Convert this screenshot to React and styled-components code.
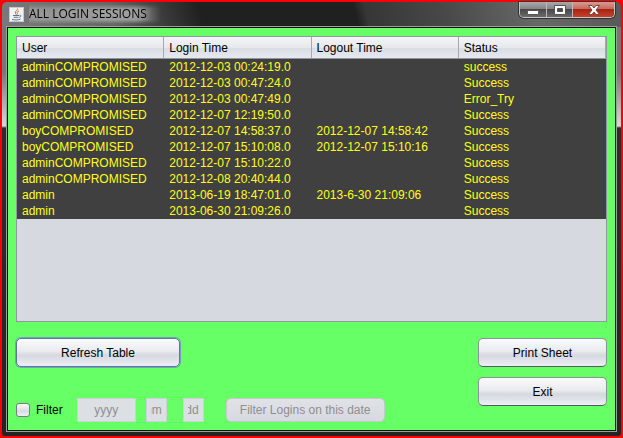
import React from "react";
import styled, { createGlobalStyle, css } from "styled-components";

const GlobalStyle = createGlobalStyle`
  * { box-sizing: border-box; }
  body {
    margin: 0;
    background: #fe0000;
    color: #000;
    font: 12px/16px "Liberation Sans", Arial, sans-serif;
  }
`;

const Desktop = styled.div`
  display: flex;
  min-height: 100vh;
  padding: 2px;
  background: #fe0000;
`;

const Window = styled.main`
  flex: 1;
  min-width: 0;
  display: flex;
  flex-direction: column;
  padding: 0 5px 5px;
  border-radius: 5px 5px 3px 3px;
  background:
    linear-gradient(75deg, #7a7a7a 0, #666 110px, #3a3a3a 160px, #202020 195px, #202020 345px, #363636 355px, #484848 430px, #686868 520px, #585858 100%) top / 100% 25px no-repeat,
    linear-gradient(#777 0, #777 70px, #d8d8d8 124px, #2e2e2e 126px, #242424 100%);
`;

const TitleBar = styled.header`
  display: flex;
  align-items: flex-start;
  height: 25px;
  padding: 0 1px 0 2px;
`;

const Title = styled.h1`
  display: flex;
  align-items: center;
  gap: 5px;
  flex: 1;
  min-width: 0;
  height: 24px;
  margin: 0;
  font: 12px/20px "Open Sans", "Noto Sans", sans-serif;
  white-space: nowrap;
`;

const TitleText = styled.span`
  padding: 0 14px 0 0;
  background: linear-gradient(90deg, rgba(165, 165, 165, 0.5), rgba(165, 165, 165, 0.8) 80%, transparent);
  mask-image: linear-gradient(transparent, #000 25%, #000 80%, transparent);
  text-shadow: 0 0 6px #bbb, 0 0 8px #aaa;
`;

const Controls = styled.div`
  display: flex;
  height: 16px;
  border: 1px solid #c5c5c5;
  border-top: 0;
  border-radius: 0 0 5px 5px;
  box-shadow: 0 0 0 1px #333;
  overflow: hidden;
`;

const ControlButton = styled.button`
  display: grid;
  place-items: center;
  width: ${(p) => (p.$close ? 42 : 26)}px;
  padding: 0;
  border: 0;
  border-left: ${(p) => (p.$first ? "0" : "1px solid #c0b8b8")};
  background: ${(p) =>
    p.$close
      ? "linear-gradient(#d99b92 0, #c56a5e 45%, #a92413 50%, #c8402b 100%)"
      : "linear-gradient(#aaa 0, #858585 45%, #484848 50%, #6b6b6b 100%)"};
`;

const Content = styled.section`
  flex: 1;
  display: flex;
  flex-direction: column;
  gap: 16px;
  padding: 8px 8px 8px;
  border: 1px solid #111;
  outline: 1px solid #98a098;
  background: #66ff66;
`;

const TablePane = styled.div`
  flex: 1;
  border: 1px solid #9297a1;
  background: #d6d9df;
`;

const SessionTable = styled.table`
  width: 100%;
  table-layout: fixed;
  border-collapse: separate;
  border-spacing: 0;
  text-align: left;
`;

const HeadCell = styled.th`
  height: 22px;
  padding: 0 5px;
  border-right: 1px solid #a4a8b0;
  border-bottom: 1px solid #8e939d;
  background: linear-gradient(#f5f5f8, #e7e8ec 50%, #dadde3 55%, #e6e9f0);
  font-weight: 400;
`;

const Cell = styled.td`
  height: 16px;
  padding: 1px 6px 0 5px;
  background: #404040;
  color: #ffff1a;
  line-height: 15px;
  white-space: nowrap;
`;

const Footer = styled.footer`
  display: flex;
  justify-content: space-between;
  align-items: flex-start;
`;

const Side = styled.div`
  display: flex;
  flex-direction: column;
  gap: ${(p) => p.$gap}px;
`;

const Button = styled.button`
  width: ${(p) => p.$width}px;
  height: 29px;
  padding: 0;
  border: 1px solid #8c9199;
  border-bottom-color: #555a62;
  border-radius: 5px;
  background: linear-gradient(#fafbfc 0, #e9ebef 45%, #d5d8de 60%, #eceff5 100%);
  color: #000;
  font: inherit;
  white-space: nowrap;

  ${(p) =>
    p.$focused &&
    css`
      border-color: #5b7898;
      box-shadow: 0 0 0 1px #73a4bf;
    `}

  &:disabled {
    height: 24px;
    border-color: #c5c9ce;
    background: linear-gradient(#e0e2e7, #d6d9df);
    color: #8e8f91;
  }
`;

const FilterRow = styled.div`
  display: flex;
  align-items: center;
`;

const FilterLabel = styled.label`
  display: flex;
  align-items: center;
  gap: 6px;
  margin-right: 14px;
`;

const Check = styled.input`
  appearance: none;
  width: 14px;
  height: 14px;
  margin: 0;
  border: 1px solid #777c86;
  border-radius: 3px;
  background: linear-gradient(#fafafc, #d8dbe1 60%, #eef0f4);
`;

const DateField = styled.input`
  width: ${(p) => p.$width}px;
  height: 24px;
  margin-right: ${(p) => p.$after}px;
  padding: 0 4px;
  border: 1px solid #cbd2d8;
  border-radius: 0;
  background: #dcdfe4;
  color: #8e8f91;
  font: 12px/16px "Liberation Sans", Arial, sans-serif;
  text-align: center;
  direction: rtl;
`;

const columns = ["User", "Login Time", "Logout Time", "Status"];

const sessions = [
  ["adminCOMPROMISED", "2012-12-03 00:24:19.0", "", "success"],
  ["adminCOMPROMISED", "2012-12-03 00:47:24.0", "", "Success"],
  ["adminCOMPROMISED", "2012-12-03 00:47:49.0", "", "Error_Try"],
  ["adminCOMPROMISED", "2012-12-07 12:19:50.0", "", "Success"],
  ["boyCOMPROMISED", "2012-12-07 14:58:37.0", "2012-12-07 14:58:42", "Success"],
  ["boyCOMPROMISED", "2012-12-07 15:10:08.0", "2012-12-07 15:10:16", "Success"],
  ["adminCOMPROMISED", "2012-12-07 15:10:22.0", "", "Success"],
  ["adminCOMPROMISED", "2012-12-08 20:40:44.0", "", "Success"],
  ["admin", "2013-06-19 18:47:01.0", "2013-6-30 21:09:06", "Success"],
  ["admin", "2013-06-30 21:09:26.0", "", "Success"],
];

function JavaIcon() {
  return (
    <svg width="15" height="15" viewBox="0 0 15 15" fill="none" aria-hidden="true">
      <rect x=".5" y=".5" width="14" height="14" fill="#f1f2f4" stroke="#c3cad2" />
      <path d="M8.6 1.5C9 3.6 5.6 4.2 6.3 6c.2.7.8 1.1 1 1.7M10 4C8.500 4.500 7.500 5.300 8.300 6.300c.4.6.2 1-.2 1.400" stroke="#e0683c" />
      <path d="M4 8.500h6M4.700 10.300h4.800M3 12.300c2 1 6.500.9 8.500-.3M10.500 8.300c2.200-.5 2 1.500-.2 2" stroke="#56738f" />
    </svg>
  );
}

const MinimizeIcon = () => (
  <svg width="14" height="12" aria-hidden="true">
    <rect x="1.500" y="6.500" width="11" height="4" rx="1" fill="#fff" stroke="#555" />
  </svg>
);

const MaximizeIcon = () => (
  <svg width="14" height="12" aria-hidden="true">
    <path fillRule="evenodd" d="M1.500 1.500h11v9h-11zM4.500 4.500v3h5v-3z" fill="#fff" stroke="#555" />
  </svg>
);

const CloseIcon = () => (
  <svg width="14" height="12" aria-hidden="true">
    <path d="M1.500 1.500h3.500L7 4l2-2.500h3.500L9 6l3.500 4.500H9L7 8l-2 2.500H1.500L5 6z" fill="#fff" stroke="#6d4642" />
  </svg>
);

export default function App() {
  return (
    <Desktop>
      <GlobalStyle />
      <Window>
        <TitleBar>
          <Title>
            <JavaIcon />
            <TitleText>ALL LOGIN SESSIONS</TitleText>
          </Title>
          <Controls>
            <ControlButton $first aria-label="Minimize"><MinimizeIcon /></ControlButton>
            <ControlButton aria-label="Maximize"><MaximizeIcon /></ControlButton>
            <ControlButton $close aria-label="Close"><CloseIcon /></ControlButton>
          </Controls>
        </TitleBar>
        <Content>
          <TablePane>
            <SessionTable>
              <thead>
                <tr>{columns.map((name) => <HeadCell key={name} scope="col">{name}</HeadCell>)}</tr>
              </thead>
              <tbody>
                {sessions.map((row) => (
                  <tr key={row[1]}>
                    {row.map((value, i) => <Cell key={columns[i]}>{value}</Cell>)}
                  </tr>
                ))}
              </tbody>
            </SessionTable>
          </TablePane>
          <Footer>
            <Side $gap={31}>
              <Button $width={164} $focused>Refresh Table</Button>
              <FilterRow>
                <FilterLabel><Check type="checkbox" />Filter</FilterLabel>
                <DateField aria-label="Year" defaultValue="yyyy" $width={59} $after={10} disabled />
                <DateField aria-label="Month" defaultValue="mm" $width={21} $after={16} disabled />
                <DateField aria-label="Day" defaultValue="dd" $width={21} $after={22} disabled />
                <Button $width={159} disabled>Filter Logins on this date</Button>
              </FilterRow>
            </Side>
            <Side $gap={10}>
              <Button $width={129}>Print Sheet</Button>
              <Button $width={129}>Exit</Button>
            </Side>
          </Footer>
        </Content>
      </Window>
    </Desktop>
  );
}
